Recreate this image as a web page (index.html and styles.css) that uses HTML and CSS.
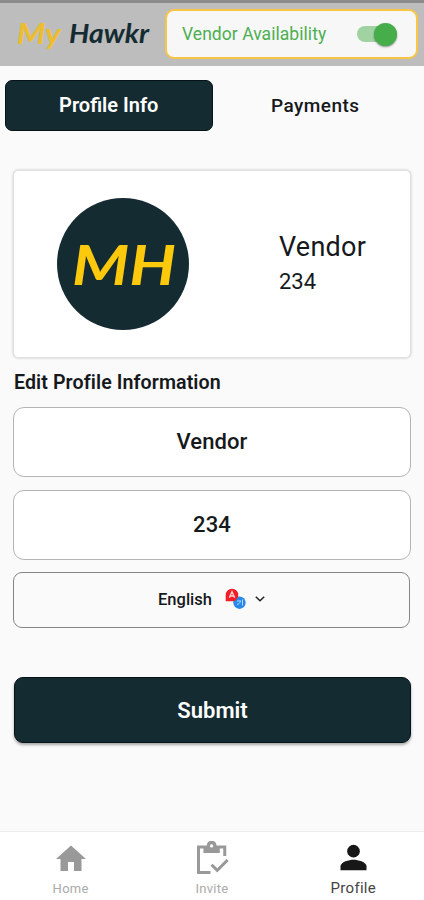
FILE: index.html
```html
<!DOCTYPE html>
<html lang="en">
<head>
<meta charset="utf-8">
<title>My Hawkr – Profile</title>
<link rel="stylesheet" href="styles.css">
</head>
<body>
<div class="app">
  <header class="topbar">
    <svg class="wordmark" width="140" height="42" viewBox="0 0 140 42">
      <text class="script gold" x="3" y="29" font-size="29" textLength="44" lengthAdjust="spacingAndGlyphs">My</text>
      <text class="script ink" x="55" y="28" font-size="27" textLength="80" lengthAdjust="spacingAndGlyphs">Hawkr</text>
    </svg>
    <div class="availability">
      <span>Vendor Availability</span>
      <div class="switch"><i class="thumb"></i></div>
    </div>
  </header>
  <nav class="tabs">
    <button class="tab active">Profile Info</button>
    <button class="tab">Payments</button>
  </nav>
  <main>
    <section class="card">
      <svg class="avatar" width="134" height="134" viewBox="0 0 134 134">
        <circle cx="67" cy="67" r="66" fill="#152b32"/>
        <text class="script mark" x="16" y="88" font-size="56" textLength="104" lengthAdjust="spacingAndGlyphs">MH</text>
      </svg>
      <div class="who"><div class="name">Vendor</div><div class="num">234</div></div>
    </section>
    <h2>Edit Profile Information</h2>
    <div class="field">Vendor</div>
    <div class="field">234</div>
    <div class="language">
      <span>English</span>
      <svg class="translate" width="22" height="22" viewBox="0 0 22 22">
        <path fill="#2788ea" d="M14.500 8.500a6.200 6.200 0 1 1-6.200 6.200V8.500z"/>
        <path fill="#f21d27" d="M7 .7a6.300 6.300 0 1 1 0 12.600H.7V7A6.300 6.300 0 0 1 7 .7z"/>
        <path fill="none" stroke="#ffd5d5" stroke-width="1.300" d="M4.300 9.700 7 3.700l2.700 6M5.200 8h3.600"/>
        <path fill="none" stroke="#b5d8fb" stroke-width="1" d="M12 13h4M12 16.500c2-.5 3-1.500 3.500-3.500M17.500 11.500v6"/>
      </svg>
      <svg class="chev" width="10" height="6" viewBox="0 0 10 6"><path fill="none" stroke="#222" stroke-width="1.500" d="M.8.7 5 4.700 9.200.7"/></svg>
    </div>
    <button class="submit">Submit</button>
  </main>
  <footer class="bottom">
    <a class="item">
      <svg width="36" height="36" viewBox="0 0 24 24"><path d="M10 20v-6h4v6h5v-8h3L12 3 2 12h3v8z"/></svg>
      <span>Home</span>
    </a>
    <a class="item">
      <svg width="36" height="36" viewBox="0 0 24 24"><path fill-rule="evenodd" d="M2 3h6.500a3.200 3.200 0 0 1 6.500 0h6.500v7h-2V5h-2.300v3H6.300V5H4v15h7v2H2zM11.750 2.200a1.100 1.100 0 1 0 0 2.200 1.100 1.100 0 0 0 0-2.200z"/><path d="m21.700 12-6.200 6.200-3.100-3.100-1.400 1.400 4.500 4.500 7.600-7.600z"/></svg>
      <span>Invite</span>
    </a>
    <a class="item current">
      <svg width="39" height="39" viewBox="0 0 24 24"><circle cx="12" cy="8.700" r="3.900"/><path d="M12 14c-2.700 0-8 1.300-8 4v2.500h16V18c0-2.700-5.300-4-8-4z"/></svg>
      <span>Profile</span>
    </a>
  </footer>
</div>
</body>
</html>
```

FILE: styles.css
```css
* { box-sizing: border-box; }
body { margin: 0; background: #fafafa; font-family: Roboto, sans-serif; color: #16191b; }
button { border: 0; background: none; padding: 0; font: inherit; color: inherit; }
.app { height: 900px; display: flex; flex-direction: column; overflow: hidden; }
.topbar { height: 66px; flex: none; background: #bdbdbd; border-top: 3px solid #8b8b8b; padding: 6px 6px 0 14px; display: flex; justify-content: space-between; align-items: flex-start; }
.wordmark { margin-top: 6px; }
.script { font-family: Lato, sans-serif; font-style: italic; font-weight: 700; }
.gold { fill: #eebd2d; }
.ink { fill: #152b32; }
.mark { fill: #fdc90c; }
.availability { width: 253px; height: 50px; border: 2px solid #f8c545; border-radius: 9px; background: #f7f7f7; padding: 0 19px 0 15px; display: flex; align-items: center; justify-content: space-between; color: #4caf50; font-size: 17.5px; letter-spacing: .05px; }
.switch { width: 40px; height: 16px; border-radius: 8px; background: #a0d2a2; display: flex; justify-content: flex-end; align-items: center; }
.thumb { width: 23px; height: 23px; flex: none; border-radius: 50%; background: #46ad4b; box-shadow: 0 1px 2px #0006; }
.tabs { display: flex; padding: 14px 6px 0 5px; flex: none; }
.tab { flex: 1; height: 51px; font-size: 19px; font-weight: 500; letter-spacing: .45px; border-radius: 7px; padding-bottom: 1px; }
.tab.active { background: #152b32; border: 1px solid #061318; color: #fff; font-size: 20px; letter-spacing: 0; font-weight: 600; }
main { padding: 39px 13px 0; flex: 1; }
.card { height: 188px; background: #fff; border: 1px solid #e0e0e0; border-radius: 5px; box-shadow: 0 0 3px #0003; display: flex; align-items: center; padding-left: 42px; }
.who { margin-left: 89px; padding-bottom: 1px; }
.name { font-size: 27px; line-height: 36px; letter-spacing: .25px; }
.num { font-size: 22px; line-height: 33px; }
h2 { margin: 13px 0 12px 1px; font-size: 19.6px; line-height: 24px; font-weight: 600; letter-spacing: .1px; }
.field { height: 70px; margin-bottom: 13px; border: 1px solid #b5b5b5; border-radius: 11px; background: #fff; display: flex; align-items: center; justify-content: center; font-size: 22px; font-weight: 500; letter-spacing: .1px; padding-bottom: 1px; }
.language { height: 56px; margin: -1px 1px 0 0; border: 1px solid #858585; border-radius: 9px; display: flex; align-items: center; justify-content: center; font-size: 16.5px; font-weight: 500; padding-bottom: 2px; }
.translate { margin-left: 13px; }
.chev { margin-left: 8px; }
.submit { display: block; width: 397px; height: 66px; margin: 49px 0 0 1px; border-radius: 9px; border: 1px solid #061318; background: #152b32; box-shadow: 0 2px 3px #0005; color: #fff; font-size: 22px; font-weight: 600; padding-top: 1px; }
.bottom { height: 69px; flex: none; background: #fff; border-top: 1px solid #eee; display: flex; }
.item { flex: 1; display: flex; flex-direction: column; align-items: center; padding-top: 9px; color: #aaa; font-size: 13px; letter-spacing: .3px; line-height: 16px; }
.item svg { flex: none; fill: #999; }
.item span { margin-top: 4px; }
.current { padding-top: 5px; color: #444; font-size: 15px; }
.current svg { fill: #171717; }
```
